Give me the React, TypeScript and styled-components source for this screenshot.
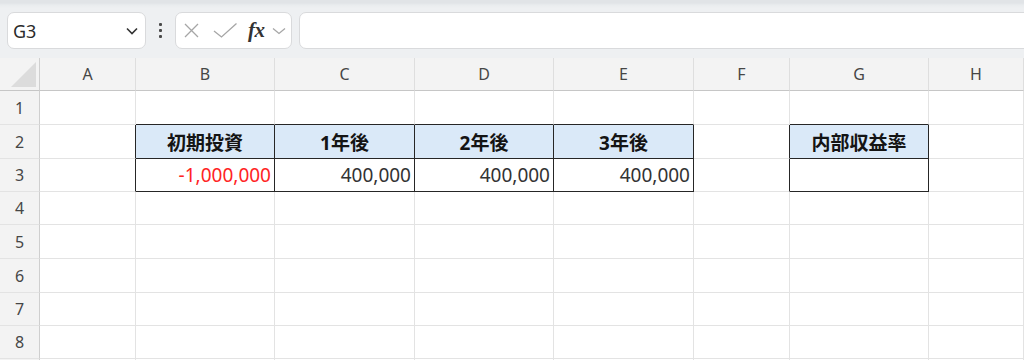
import React from 'react';
import styled, { createGlobalStyle } from 'styled-components';

const GlobalStyle = createGlobalStyle`
  html, body {
    margin: 0;
    padding: 0;
    background: #ffffff;
  }
  body {
    font-family: "Noto Sans", "Noto Sans CJK JP", sans-serif;
    overflow: hidden;
  }
`;

const Page = styled.div`
  width: 1024px;
  height: 360px;
  overflow: hidden;
  display: flex;
  flex-direction: column;
`;

const Toolbar = styled.div`
  flex: none;
  height: 58px;
  box-sizing: border-box;
  padding: 12px 0 9px 7px;
  display: flex;
  align-items: stretch;
  background: linear-gradient(#e1e4e7 0, #e1e4e7 3px, #e9ecee 5px, #eef0f2 8px);
`;

const Box = styled.div<{ $width?: number }>`
  box-sizing: border-box;
  ${({ $width }) => ($width ? `width: ${$width}px; flex: none;` : 'flex: 1; margin-right: -12px;')}
  background: #ffffff;
  border: 1px solid #d9dadc;
  border-radius: 7px;
  display: flex;
  align-items: center;
`;

const NameText = styled.span`
  flex: 1;
  padding-left: 5px;
  font-size: 18px;
  color: #2a2a2a;
`;

const Dots = styled.div`
  width: 29px;
  flex: none;
  display: flex;
  flex-direction: column;
  align-items: center;
  justify-content: center;
  gap: 3px;
  span {
    width: 3px;
    height: 3px;
    border-radius: 1px;
    background: #4a4a4a;
  }
`;

const FormulaGap = styled.div`
  width: 7px;
  flex: none;
`;

const Icon = styled.svg<{ $ml: number }>`
  flex: none;
  margin-left: ${({ $ml }) => $ml}px;
  display: block;
`;

const Fx = styled.span`
  margin-left: 10px;
  font-family: "Liberation Serif", "DejaVu Serif", serif;
  font-style: italic;
  font-weight: 700;
  font-size: 21px;
  color: #333333;
  line-height: 1;
  letter-spacing: -0.5px;
`;

const Grid = styled.div`
  display: grid;
  grid-template-columns: 40px 96px 139px 140px 139px 140px 96px 139px 1fr;
  grid-template-rows: 33px 34px 34px 33px 33px 34px 34px 33px 33px 30px;
`;

const Corner = styled.div`
  position: relative;
  box-sizing: border-box;
  background: #f3f3f3;
  border-right: 1px solid #cfcfcf;
  border-bottom: 1px solid #c6c6c6;
  &::after {
    content: '';
    position: absolute;
    left: 11px;
    top: 4px;
    width: 25px;
    height: 25px;
    background: #dcdcdc;
    clip-path: polygon(100% 0, 100% 100%, 0 100%);
  }
`;

const ColHead = styled.div`
  box-sizing: border-box;
  background: #f3f3f3;
  border-right: 1px solid #dedede;
  border-bottom: 1px solid #c6c6c6;
  display: flex;
  align-items: center;
  justify-content: center;
  font-size: 16px;
  color: #464646;
`;

const RowHead = styled.div`
  box-sizing: border-box;
  background: #f3f3f3;
  border-right: 1px solid #cfcfcf;
  border-bottom: 1px solid #e3e3e3;
  display: flex;
  align-items: center;
  justify-content: center;
  font-size: 16px;
  color: #464646;
`;

const Cell = styled.div<{
  $fill?: string;
  $align: 'left' | 'center' | 'right';
  $bold?: boolean;
  $color?: string;
  $darkRight: boolean;
  $darkBottom: boolean;
}>`
  box-sizing: border-box;
  background: ${({ $fill }) => $fill || '#ffffff'};
  border-right: 1px solid ${({ $darkRight }) => ($darkRight ? '#262626' : '#e3e3e3')};
  border-bottom: 1px solid ${({ $darkBottom }) => ($darkBottom ? '#262626' : '#e3e3e3')};
  display: flex;
  align-items: center;
  justify-content: ${({ $align }) => ($align === 'right' ? 'flex-end' : $align === 'center' ? 'center' : 'flex-start')};
  padding: 0 3px;
  font-size: 19px;
  font-weight: ${({ $bold }) => ($bold ? 700 : 400)};
  color: ${({ $color }) => $color || '#333333'};
  white-space: nowrap;
  overflow: hidden;
`;

const columns = ['A', 'B', 'C', 'D', 'E', 'F', 'G', 'H'];
// row 9 starts at the very bottom edge, only its top line shows
const rows = [1, 2, 3, 4, 5, 6, 7, 8, 9];

type CellData = { text: string; kind: 'head' | 'num' | 'neg' | 'empty' };

const cells: Record<string, CellData> = {
  B2: { text: '初期投資', kind: 'head' },
  C2: { text: '1年後', kind: 'head' },
  D2: { text: '2年後', kind: 'head' },
  E2: { text: '3年後', kind: 'head' },
  G2: { text: '内部収益率', kind: 'head' },
  B3: { text: '-1,000,000', kind: 'neg' },
  C3: { text: '400,000', kind: 'num' },
  D3: { text: '400,000', kind: 'num' },
  E3: { text: '400,000', kind: 'num' },
  G3: { text: '', kind: 'empty' },
};

const textColor = (kind?: CellData['kind']) =>
  kind === 'neg' ? '#ff2424' : kind === 'head' ? '#141414' : undefined;

const colLetter = (i: number) => 'ABCDEFGHI'[i];
const boxed = (c: number, r: number) => cells[`${colLetter(c)}${r}`] !== undefined;

export default function App() {
  return (
    <>
      <GlobalStyle />
      <Page>
        <Toolbar>
          <Box $width={139}>
            <NameText>G3</NameText>
            <Icon $ml={0} width="12" height="8" viewBox="0 0 12 8" style={{ marginRight: 7 }}>
              <polyline points="1,1.5 6,6.5 11,1.5" fill="none" stroke="#333" strokeWidth="1.6" />
            </Icon>
          </Box>
          <Dots>
            <span />
            <span />
            <span />
          </Dots>
          <Box $width={117}>
            <Icon $ml={8} width="15" height="15" viewBox="0 0 15 15">
              <path d="M1 1 L14 14 M14 1 L1 14" stroke="#a6a6a6" strokeWidth="1.3" fill="none" />
            </Icon>
            <Icon $ml={14} width="25" height="17" viewBox="0 0 25 17">
              <polyline points="1,9 8.5,15 23.5,1.5" fill="none" stroke="#a6a6a6" strokeWidth="1.3" />
            </Icon>
            <Fx>fx</Fx>
            <Icon $ml={7} width="14" height="8" viewBox="0 0 14 8">
              <polyline points="1,1.5 7,6.5 13,1.5" fill="none" stroke="#a6a6a6" strokeWidth="1.3" />
            </Icon>
          </Box>
          <FormulaGap />
          <Box />
        </Toolbar>
        <Grid>
          <Corner />
          {columns.map((c, i) => (
            <ColHead key={`h${i}`}>{c}</ColHead>
          ))}
          {rows.map((r) => (
            <React.Fragment key={r}>
              <RowHead>{r < 9 ? r : ''}</RowHead>
              {columns.map((_, ci) => {
                const data = cells[`${colLetter(ci)}${r}`];
                const me = boxed(ci, r);
                const darkRight = me || boxed(ci + 1, r);
                const darkBottom = me || boxed(ci, r + 1);
                return (
                  <Cell
                    key={ci}
                    $fill={data?.kind === 'head' ? '#dae9f8' : undefined}
                    $align={data?.kind === 'head' ? 'center' : 'right'}
                    $bold={data?.kind === 'head'}
                    $color={textColor(data?.kind)}
                    $darkRight={darkRight}
                    $darkBottom={darkBottom}
                  >
                    {data?.text}
                  </Cell>
                );
              })}
            </React.Fragment>
          ))}
        </Grid>
      </Page>
    </>
  );
}
